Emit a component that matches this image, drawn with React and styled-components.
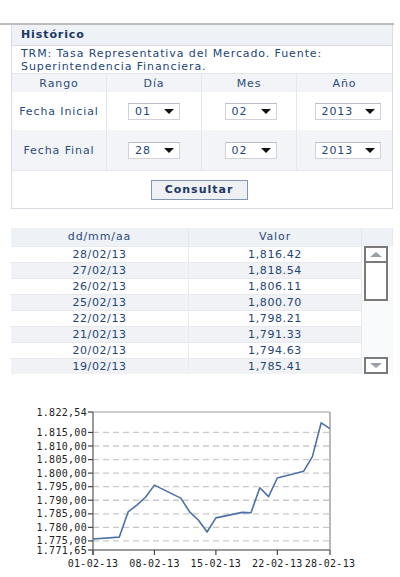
import React from 'react';
import styled, { createGlobalStyle } from 'styled-components';

const GlobalStyle = createGlobalStyle`
  html, body {
    margin: 0;
    padding: 0;
    background: #fff;
  }
  body {
    font-family: "DejaVu Sans", Verdana, sans-serif;
    font-size: 11px;
    letter-spacing: 0.9px;
    color: #1f3f6e;
  }
`;

const Page = styled.div`
  width: 400px;
  height: 577px;
  overflow: hidden;
  padding-top: 23px;
  box-sizing: border-box;
`;

const TopRule = styled.div`
  width: 394px;
  height: 2px;
  background: #bcbcbc;
`;

const Panel = styled.div`
  margin-left: 11px;
  width: 382px;
  border: 1px solid #d9dde3;
  border-top: none;
  box-sizing: border-box;
`;

const Title = styled.div`
  height: 20px;
  line-height: 20px;
  padding-left: 9px;
  background: #eef1f5;
  border-bottom: 1px solid #d9dde3;
  font-weight: bold;
  color: #1b3766;
`;

const Description = styled.div`
  padding: 1px 9px 0;
  line-height: 13px;
  color: #234579;
  border-bottom: 1px solid #e2e5ea;
`;

const Grid = styled.div`
  display: grid;
  grid-template-columns: repeat(4, 1fr);
`;

const Cell = styled.div`
  display: flex;
  align-items: center;
  justify-content: center;
  height: ${p => p.$h}px;
  background: ${p => (p.$shade ? '#f2f4f7' : '#fff')};
  border-right: ${p => (p.$last ? 'none' : '1px solid #e4e7eb')};
  color: #2b4a7a;
  box-sizing: border-box;
`;

const Select = styled.div`
  width: ${p => p.$w}px;
  height: 17px;
  margin-left: ${p => p.$shift || 0}px;
  display: flex;
  align-items: center;
  justify-content: space-between;
  padding: 0 5px 0 6px;
  box-sizing: border-box;
  background: #fff;
  border: 1px solid #cfd3d9;
  border-top-color: #b9bec6;
  color: #234579;
`;

const Arrow = styled.span`
  width: 0;
  height: 0;
  border-left: 5px solid transparent;
  border-right: 5px solid transparent;
  border-top: 5px solid #111;
`;

const ButtonRow = styled.div`
  height: 37px;
  display: flex;
  align-items: center;
  justify-content: center;
  border-top: 1px solid #e4e7eb;
`;

const Button = styled.button`
  width: 97px;
  height: 20px;
  margin-left: -6px;
  background: #eef0f3;
  border: 1px solid #8296b0;
  font-family: "DejaVu Sans", Verdana, sans-serif;
  font-weight: bold;
  font-size: 11px;
  letter-spacing: 1px;
  color: #1b3766;
  padding: 0;
`;

const DataTable = styled.div`
  margin: 19px 0 0 11px;
  width: 382px;
  display: grid;
  grid-template-columns: 178px 173px 31px;
`;

const HeadCell = styled.div`
  height: 18px;
  line-height: 18px;
  text-align: center;
  background: #eef1f5;
  color: #2b4a7a;
  border-right: 1px solid #e4e7eb;
`;

const RowCell = styled.div`
  height: 16px;
  line-height: 16px;
  text-align: center;
  background: ${p => (p.$shade ? '#f0f2f5' : '#fff')};
  border-right: 1px solid #e8ebef;
  border-top: 1px solid #e6e9ee;
  box-sizing: border-box;
  color: #1f4577;
  letter-spacing: 0.6px;
`;

const ScrollTrack = styled.div`
  grid-column: 3;
  grid-row: 2 / span 8;
  background: #f9fafb;
  display: flex;
  flex-direction: column;
  align-items: center;
  padding-right: 3px;
`;

const ScrollBtn = styled.div`
  width: 24px;
  height: ${p => p.$h}px;
  box-sizing: border-box;
  border: 2px solid #7a7a7a;
  background: #fff;
  display: flex;
  align-items: center;
  justify-content: center;
  margin-top: ${p => (p.$push ? 'auto' : '0')};
`;

const ChartWrap = styled.div`
  margin-top: 31px;
`;

const days = [
  [1, 1775.7], [4, 1776.4], [5, 1785.7], [6, 1788.2], [7, 1791.2], [8, 1795.6],
  [11, 1790.8], [12, 1785.7], [13, 1782.7], [14, 1778.3], [15, 1783.5], [18, 1785.5],
  [19, 1785.41], [20, 1794.63], [21, 1791.33], [22, 1798.21], [25, 1800.7],
  [26, 1806.11], [27, 1818.54], [28, 1816.42],
];

const rows = [
  ['28/02/13', '1,816.42'], ['27/02/13', '1,818.54'], ['26/02/13', '1,806.11'],
  ['25/02/13', '1,800.70'], ['22/02/13', '1,798.21'], ['21/02/13', '1,791.33'],
  ['20/02/13', '1,794.63'], ['19/02/13', '1,785.41'],
];

const MIN = 1771.65;
const MAX = 1822.54;
const X0 = 93;
const X1 = 330;
const Y0 = 7;
const Y1 = 145;
const xOf = d => X0 + ((d - 1) / 27) * (X1 - X0);
const yOf = v => Y1 - ((v - MIN) / (MAX - MIN)) * (Y1 - Y0);

const fmt = v => {
  const [i, f] = v.toFixed(2).split('.');
  return i.replace(/\B(?=(\d{3})+(?!\d))/g, '.') + ',' + f;
};

const axisFont = {
  fontFamily: '"DejaVu Sans Mono", monospace',
  fontSize: 10,
  letterSpacing: 0.3,
  fill: '#222',
};

const Chart = () => {
  const grid = [1775, 1780, 1785, 1790, 1795, 1800, 1805, 1810, 1815];
  const labels = [MIN, ...grid, MAX];
  const xticks = [[1, '01-02-13'], [8, '08-02-13'], [15, '15-02-13'], [22, '22-02-13'], [28, '28-02-13']];
  const pts = days.map(([d, v]) => `${xOf(d).toFixed(1)},${yOf(v).toFixed(1)}`).join(' ');
  return (
    <svg width="400" height="172" viewBox="0 0 400 172" style={{ display: 'block' }}>
      {grid.map(v => (
        <line key={v} x1={X0} x2={X1} y1={yOf(v)} y2={yOf(v)} stroke="#c9c9c9" strokeWidth="1.3" strokeDasharray="6 4" />
      ))}
      <line x1={X0} x2={X1} y1={Y0} y2={Y0} stroke="#9a9a9a" strokeWidth="1" />
      <line x1={X1} x2={X1} y1={Y0} y2={Y1} stroke="#8a8a8a" strokeWidth="1.2" />
      <line x1={X0} x2={X0} y1={Y0} y2={Y1 + 5} stroke="#7a7a7a" strokeWidth="1.5" />
      <line x1={X0} x2={X1} y1={Y1} y2={Y1} stroke="#7a7a7a" strokeWidth="1.5" />
      {labels.map(v => (
        <g key={v}>
          <line x1={X0 - 5} x2={X0} y1={yOf(v)} y2={yOf(v)} stroke="#444" strokeWidth="1.2" />
          <text x={X0 - 6} y={yOf(v) + 3.5} textAnchor="end" style={axisFont}>
            {fmt(v)}
          </text>
        </g>
      ))}
      {xticks.map(([d, t]) => (
        <g key={t}>
          <line x1={xOf(d)} x2={xOf(d)} y1={Y1} y2={Y1 + 5} stroke="#444" strokeWidth="1.2" />
          <text x={xOf(d)} y={Y1 + 17} textAnchor="middle" style={axisFont}>
            {t}
          </text>
        </g>
      ))}
      <polyline points={pts} fill="none" stroke="#4d70a6" strokeWidth="1.6" strokeLinejoin="round" />
    </svg>
  );
};

export default function App() {
  return (
    <Page>
      <GlobalStyle />
      <TopRule />
      <Panel>
        <Title>Histórico</Title>
        <Description>
          TRM: Tasa Representativa del Mercado. Fuente:<br />
          Superintendencia Financiera.
        </Description>
        <Grid>
          <Cell $h={18} $shade>Rango</Cell>
          <Cell $h={18} $shade>Día</Cell>
          <Cell $h={18} $shade>Mes</Cell>
          <Cell $h={18} $shade $last>Año</Cell>

          <Cell $h={38}>Fecha Inicial</Cell>
          <Cell $h={38}><Select $w={52}>01<Arrow /></Select></Cell>
          <Cell $h={38}><Select $w={52} $shift={3}>02<Arrow /></Select></Cell>
          <Cell $h={38} $last><Select $w={66} $shift={6}>2013<Arrow /></Select></Cell>

          <Cell $h={40} $shade>Fecha Final</Cell>
          <Cell $h={40} $shade><Select $w={52}>28<Arrow /></Select></Cell>
          <Cell $h={40} $shade><Select $w={52} $shift={3}>02<Arrow /></Select></Cell>
          <Cell $h={40} $shade $last><Select $w={66} $shift={6}>2013<Arrow /></Select></Cell>
        </Grid>
        <ButtonRow>
          <Button>Consultar</Button>
        </ButtonRow>
      </Panel>

      <DataTable>
        <HeadCell>dd/mm/aa</HeadCell>
        <HeadCell>Valor</HeadCell>
        <HeadCell />
        {rows.map(([d, v], i) => (
          <React.Fragment key={d}>
            <RowCell $shade={i % 2 === 1} style={{ gridColumn: 1, gridRow: i + 2 }}>{d}</RowCell>
            <RowCell $shade={i % 2 === 1} style={{ gridColumn: 2, gridRow: i + 2 }}>{v}</RowCell>
          </React.Fragment>
        ))}
        <ScrollTrack>
          <ScrollBtn $h={17}>
            <svg width="12" height="5" viewBox="0 0 12 5"><path d="M0 5 L6 0 L12 5 Z" fill="#9aa0a8" /></svg>
          </ScrollBtn>
          <ScrollBtn $h={40} style={{ marginTop: -2 }} />
          <ScrollBtn $h={17} $push>
            <svg width="12" height="5" viewBox="0 0 12 5"><path d="M0 0 L6 5 L12 0 Z" fill="#9aa0a8" /></svg>
          </ScrollBtn>
        </ScrollTrack>
      </DataTable>

      <ChartWrap>
        <Chart />
      </ChartWrap>
    </Page>
  );
}
